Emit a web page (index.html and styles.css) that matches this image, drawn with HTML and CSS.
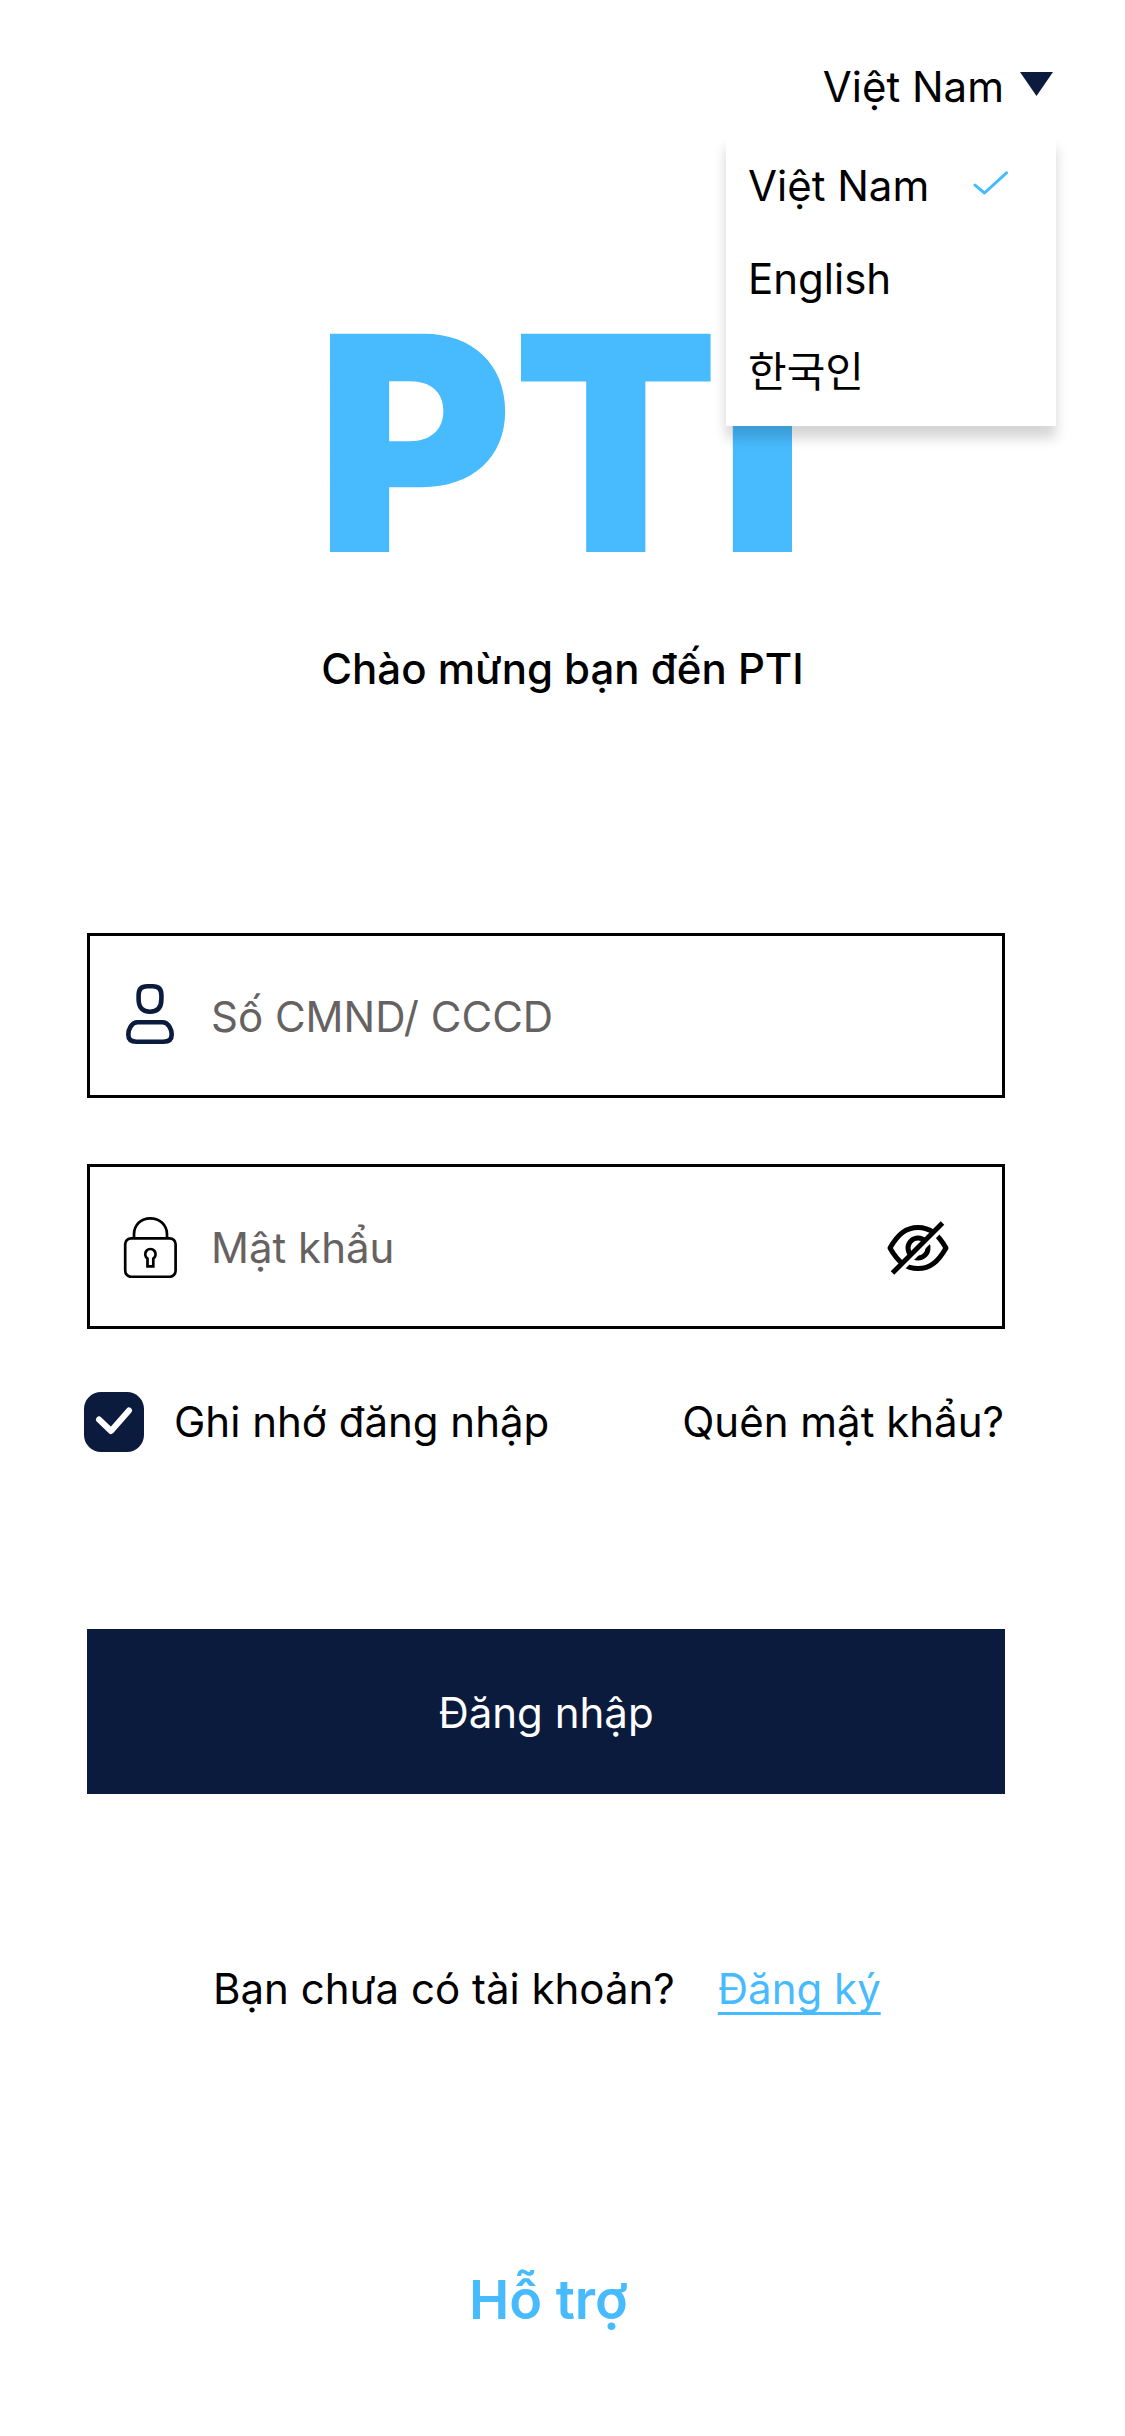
FILE: index.html
```html
<!DOCTYPE html>
<html lang="vi">
<head>
<meta charset="utf-8">
<title>PTI</title>
<link rel="stylesheet" href="styles.css">
</head>
<body>
<main class="screen">
  <header class="topbar">
    <div class="language">
      <span>Việt Nam</span>
      <svg class="caret" width="33" height="24" viewBox="0 0 33 24"><path d="M0 0H33L16.5 24Z" fill="#0b1b3d"/></svg>
      <ul class="menu">
        <li class="menu-item"><span>Việt Nam</span><svg width="36" height="26" viewBox="0 0 36 26" fill="none" stroke="#48bbff" stroke-width="3" stroke-linecap="round" stroke-linejoin="round"><path d="M2 15.2L11.500 23L33.5 2.8"/></svg></li>
        <li class="menu-item">English</li>
        <li class="menu-item">한국인</li>
      </ul>
    </div>
  </header>
  <h1 class="logo">PTI</h1>
  <p class="welcome">Chào mừng bạn đến PTI</p>
  <form class="form">
    <label class="field">
      <svg class="field-icon" width="60" height="66" viewBox="0 0 60 66" fill="none" stroke="#0b1b3d" stroke-width="4.6"><path d="M27.300 6.300H32.700Q41.400 6.300 41.400 15V19Q41.400 31.700 30 31.700T18.600 19V15Q18.600 6.300 27.300 6.300Z"/><path d="M17.500 42.300H42.500C48.500 42.300 51.700 49.500 51.700 54.500Q51.700 61.700 43.500 61.700H16.500Q8.300 61.700 8.300 54.500C8.300 49.500 11.500 42.300 17.500 42.300Z"/></svg>
      <span class="placeholder">Số CMND/ CCCD</span>
    </label>
    <label class="field">
      <svg class="field-icon lock" width="60" height="66" viewBox="0 0 60 66" fill="none" stroke="#000" stroke-width="2.7"><rect x="5.2" y="26.3" width="50.4" height="38.5" rx="6"/><path d="M14 26V22.500C14 13 21 6.300 30.300 6.300S47 13 47 22.500V26"/><path d="M27.500 54.300V46.500A5.200 5.200 0 1 1 33.300 46.500V54.300Z"/></svg>
      <span class="placeholder">Mật khẩu</span>
      <svg class="eye" width="72" height="72" viewBox="0 0 72 72" fill="none" stroke="#000" stroke-width="5"><path d="M8 36C16 22 24 15.500 36 15.500S56 22 64 36C56 50 48 56.500 36 56.500S16 50 8 36Z" stroke-linejoin="round"/><circle cx="36" cy="36" r="10"/><path d="M13.500 63L63.500 13" stroke="#fff"/><path d="M10.500 61L60.500 11"/></svg>
    </label>
    <div class="options">
      <label class="remember"><svg width="60" height="60" viewBox="0 0 60 60" fill="none"><rect width="60" height="60" rx="17" fill="#0b1b3d"/><path d="M15 27.500L27 39L45 18.500" stroke="#fff" stroke-width="6" stroke-linecap="round" stroke-linejoin="round"/></svg><span>Ghi nhớ đăng nhập</span></label>
      <a class="forgot">Quên mật khẩu?</a>
    </div>
    <button class="submit" type="button">Đăng nhập</button>
  </form>
  <p class="signup"><span>Bạn chưa có tài khoản?</span><a class="signup-link">Đăng ký</a></p>
  <a class="support">Hỗ trợ</a>
</main>
</body>
</html>
```
FILE: styles.css
```css
* { box-sizing: border-box; margin: 0; padding: 0; }
body { background: #fff; }
.screen {
  width: 1125px;
  height: 2436px;
  overflow: hidden;
  background: #fff;
  color: #000;
  font: 400 42px/51px Inter, "Noto Sans CJK KR", sans-serif;
  display: flex;
  flex-direction: column;
}
.topbar { display: flex; justify-content: flex-end; padding: 61px 72px 0 0; }
.language { position: relative; display: flex; gap: 16px; }
.caret { margin-top: 11px; }
.menu {
  position: absolute;
  top: 75px;
  right: -3px;
  width: 330px;
  height: 290px;
  padding: 24px 47px 0 22px;
  display: flex;
  flex-direction: column;
  gap: 42px;
  list-style: none;
  background: #fff;
  box-shadow: 0 12px 12px rgba(0, 0, 0, .17);
}
.menu-item { height: 51px; display: flex; justify-content: space-between; }
.menu-item svg { margin-top: 10px; }
.logo { margin: 149px 3px 0 0; text-align: center; font-size: 300px; line-height: 363px; font-weight: 900; color: #48bbff; }
.welcome { margin-top: 19px; text-align: center; font-weight: 500; }
.form { margin: 239px 120px 0 87px; display: flex; flex-direction: column; }
.field { height: 165px; margin-bottom: 66px; border: 3px solid #000; padding: 0 48px 0 30px; display: flex; align-items: center; }
.field-icon { flex: none; margin: 0 31px 6px 0; }
.field-icon.lock { margin-bottom: 4px; }
.placeholder { flex: 1; padding-top: 2px; color: #666262; }
.eye { flex: none; margin-top: 2px; }
.options { margin: -3px 0 0 -3px; display: flex; justify-content: space-between; align-items: center; }
.remember { display: flex; align-items: center; gap: 30px; }
.remember span, .forgot { padding-bottom: 2px; }
.forgot { margin-right: 1px; }
.submit { margin-top: 177px; height: 165px; padding-top: 2px; border: 0; background: #0b1b3d; color: #fff; font: inherit; }
.signup { margin: 169px 0 0 213px; display: flex; gap: 43px; }
.signup-link { color: #48bbff; text-decoration: underline; text-underline-offset: 8px; text-decoration-thickness: 3px; text-decoration-skip-ink: none; }
.support { margin: 253px 0 0 469px; font-size: 54px; line-height: 65px; font-weight: 600; color: #48bbff; }
```
